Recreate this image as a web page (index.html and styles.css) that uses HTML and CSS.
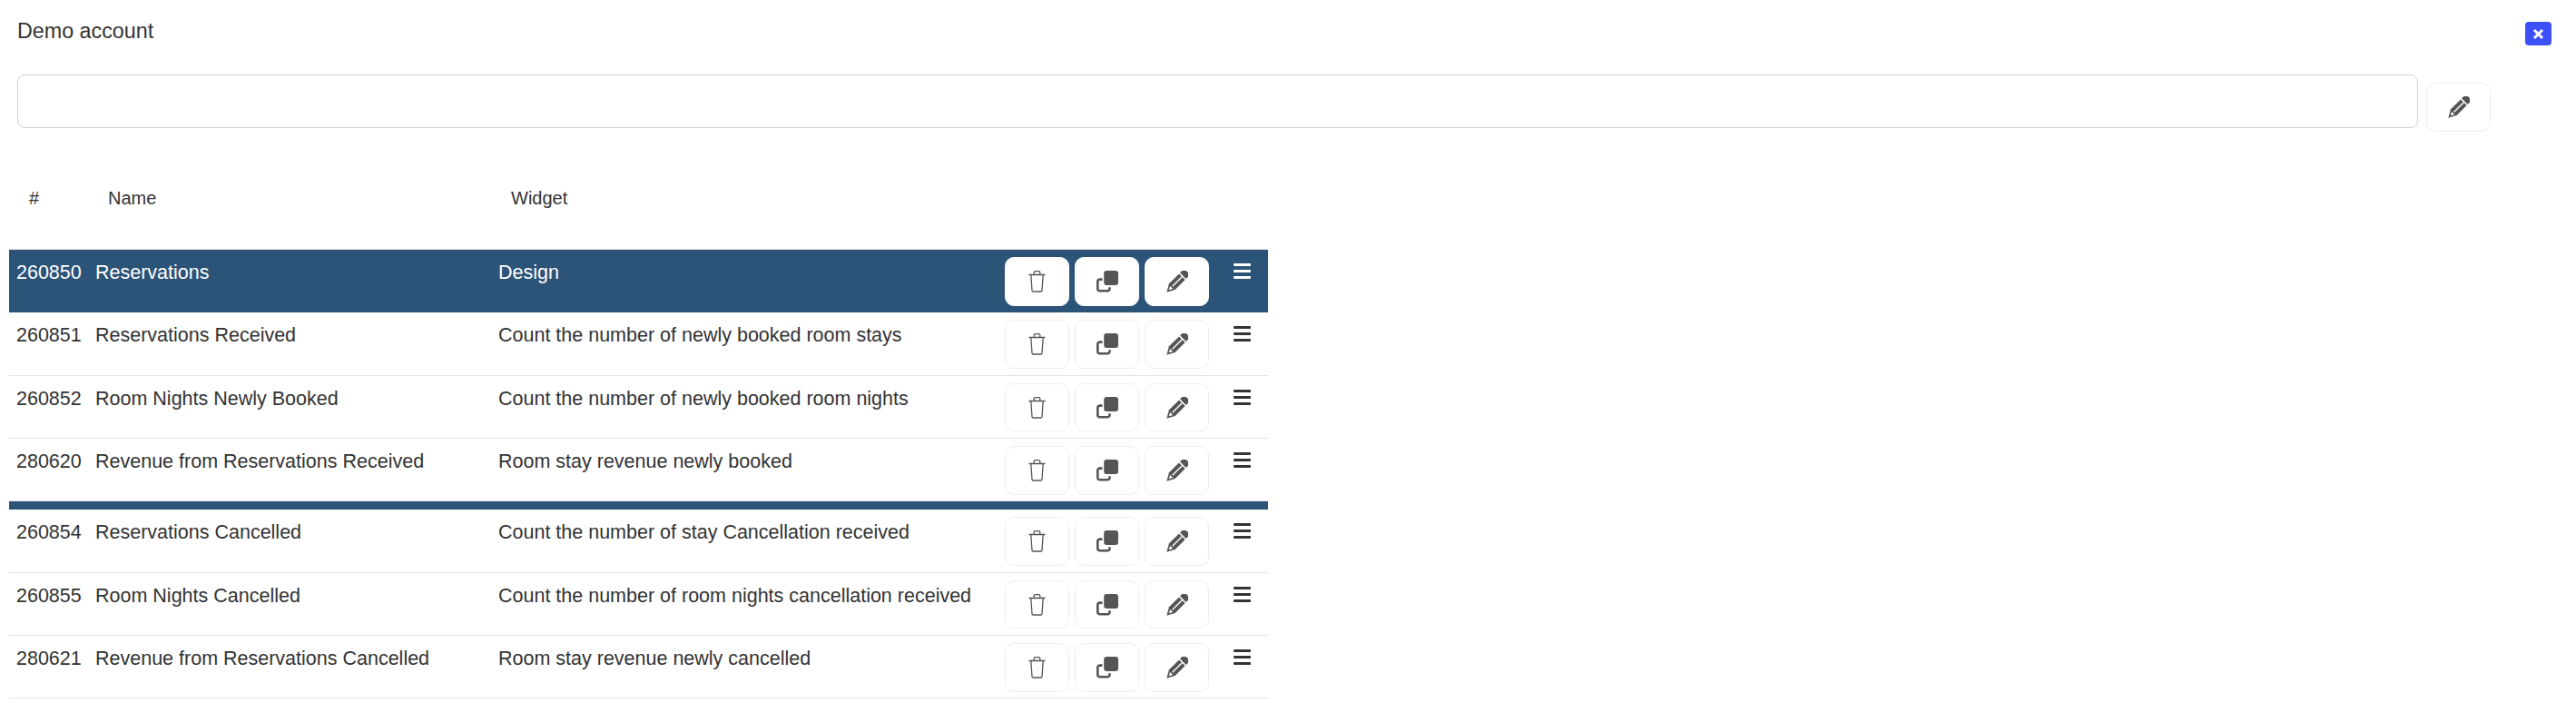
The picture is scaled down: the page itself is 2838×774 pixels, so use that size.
FILE: index.html
```html
<!DOCTYPE html>
<html lang="en">
  <head>
    <meta charset="UTF-8" />
    <title>Demo account</title>
    <link rel="stylesheet" href="styles.css">
  </head>
  <body>
    <svg class="defs" xmlns="http://www.w3.org/2000/svg">
      <symbol id="i-trash" viewBox="0 0 19 24">
        <path d="M.5 4.500h18M2.800 4.500l1.200 17.500a1.200 1.200 0 0 0 1.200 1h8.600a1.200 1.200 0 0 0 1.200-1L16.200 4.500M6.200 4.500V2a1.300 1.300 0 0 1 1.300-1.300h4A1.300 1.300 0 0 1 12.800 2v2.500" fill="none" stroke="currentColor" stroke-width="1.300"/>
      </symbol>
      <symbol id="i-copy" viewBox="0 0 24 24">
        <rect x="8.200" y="0" width="15.800" height="16" rx="3" fill="currentColor"/>
        <path d="M6.500 9.600H3.600a2.300 2.300 0 0 0-2.300 2.300v8a2.300 2.300 0 0 0 2.300 2.300h8.600a2.300 2.300 0 0 0 2.300-2.300v-1.700" fill="none" stroke="currentColor" stroke-width="2.600"/>
      </symbol>
      <symbol id="i-pencil" viewBox="0 0 24 24">
        <g transform="translate(0.300 23.700) rotate(-45)">
          <path d="M0 0 8.500-4.700H24V4.700H8.500z" fill="currentColor"/>
          <path d="M25.500-4.700H29.500a2.500 2.500 0 0 1 2.500 2.500V2.200a2.500 2.500 0 0 1-2.500 2.500H25.500z" fill="currentColor"/>
          <path d="M9 0H24" stroke="#fff" stroke-width="1.400"/>
          <path d="M3.500 0 7.500-2.100V2.100z" fill="#fff"/>
        </g>
      </symbol>
      <symbol id="i-bars" viewBox="0 0 19 17">
        <rect width="19" height="3" y="0" rx="1" fill="currentColor"/>
        <rect width="19" height="3" y="7" rx="1" fill="currentColor"/>
        <rect width="19" height="3" y="14" rx="1" fill="currentColor"/>
      </symbol>
    </svg>
    <div class="top">
      <div class="title">Demo account</div>
      <button class="close" type="button">
        <svg width="13" height="13" viewBox="0 0 13 13"><path d="M2 2l9 9M11 2l-9 9" stroke="#fff" stroke-width="3"/></svg>
      </button>
    </div>
    <div class="name-row">
      <input class="name-input" type="text">
      <button class="btn" type="button"><svg class="icon-pencil"><use href="#i-pencil"/></svg></button>
    </div>
    <table class="list">
      <thead>
        <tr>
          <th class="col-id">#</th>
          <th class="col-name">Name</th>
          <th class="col-widget">Widget</th>
          <th class="col-actions"></th>
          <th class="col-move"></th>
        </tr>
      </thead>
      <tbody id="tbody">
        <tr class="active">
          <td>260850</td>
          <td>Reservations</td>
          <td>Design</td>
          <td><div class="actions">
            <button class="btn" type="button"><svg class="icon-trash"><use href="#i-trash"/></svg></button>
            <button class="btn" type="button"><svg class="icon-copy"><use href="#i-copy"/></svg></button>
            <button class="btn" type="button"><svg class="icon-pencil"><use href="#i-pencil"/></svg></button>
          </div></td>
          <td class="move"><svg class="icon-bars"><use href="#i-bars"/></svg></td>
        </tr>
        <tr>
          <td>260851</td>
          <td>Reservations Received</td>
          <td>Count the number of newly booked room stays</td>
          <td><div class="actions">
            <button class="btn" type="button"><svg class="icon-trash"><use href="#i-trash"/></svg></button>
            <button class="btn" type="button"><svg class="icon-copy"><use href="#i-copy"/></svg></button>
            <button class="btn" type="button"><svg class="icon-pencil"><use href="#i-pencil"/></svg></button>
          </div></td>
          <td class="move"><svg class="icon-bars"><use href="#i-bars"/></svg></td>
        </tr>
        <tr>
          <td>260852</td>
          <td>Room Nights Newly Booked</td>
          <td>Count the number of newly booked room nights</td>
          <td><div class="actions">
            <button class="btn" type="button"><svg class="icon-trash"><use href="#i-trash"/></svg></button>
            <button class="btn" type="button"><svg class="icon-copy"><use href="#i-copy"/></svg></button>
            <button class="btn" type="button"><svg class="icon-pencil"><use href="#i-pencil"/></svg></button>
          </div></td>
          <td class="move"><svg class="icon-bars"><use href="#i-bars"/></svg></td>
        </tr>
        <tr>
          <td>280620</td>
          <td>Revenue from Reservations Received</td>
          <td>Room stay revenue newly booked</td>
          <td><div class="actions">
            <button class="btn" type="button"><svg class="icon-trash"><use href="#i-trash"/></svg></button>
            <button class="btn" type="button"><svg class="icon-copy"><use href="#i-copy"/></svg></button>
            <button class="btn" type="button"><svg class="icon-pencil"><use href="#i-pencil"/></svg></button>
          </div></td>
          <td class="move"><svg class="icon-bars"><use href="#i-bars"/></svg></td>
        </tr>
        <tr class="divider"><td colspan="5"></td></tr>
        <tr>
          <td>260854</td>
          <td>Reservations Cancelled</td>
          <td>Count the number of stay Cancellation received</td>
          <td><div class="actions">
            <button class="btn" type="button"><svg class="icon-trash"><use href="#i-trash"/></svg></button>
            <button class="btn" type="button"><svg class="icon-copy"><use href="#i-copy"/></svg></button>
            <button class="btn" type="button"><svg class="icon-pencil"><use href="#i-pencil"/></svg></button>
          </div></td>
          <td class="move"><svg class="icon-bars"><use href="#i-bars"/></svg></td>
        </tr>
        <tr>
          <td>260855</td>
          <td>Room Nights Cancelled</td>
          <td>Count the number of room nights cancellation received</td>
          <td><div class="actions">
            <button class="btn" type="button"><svg class="icon-trash"><use href="#i-trash"/></svg></button>
            <button class="btn" type="button"><svg class="icon-copy"><use href="#i-copy"/></svg></button>
            <button class="btn" type="button"><svg class="icon-pencil"><use href="#i-pencil"/></svg></button>
          </div></td>
          <td class="move"><svg class="icon-bars"><use href="#i-bars"/></svg></td>
        </tr>
        <tr>
          <td>280621</td>
          <td>Revenue from Reservations Cancelled</td>
          <td>Room stay revenue newly cancelled</td>
          <td><div class="actions">
            <button class="btn" type="button"><svg class="icon-trash"><use href="#i-trash"/></svg></button>
            <button class="btn" type="button"><svg class="icon-copy"><use href="#i-copy"/></svg></button>
            <button class="btn" type="button"><svg class="icon-pencil"><use href="#i-pencil"/></svg></button>
          </div></td>
          <td class="move"><svg class="icon-bars"><use href="#i-bars"/></svg></td>
        </tr>
      </tbody>
    </table>
  </body>
</html>
```

FILE: styles.css
```css
body {
  margin: 0;
  background: #fff;
  color: #333;
  font-family: "Liberation Sans", Arial, sans-serif;
  font-size: 21.5px;
  line-height: 1.5;
}
.defs {
  display: none;
}
.top {
  display: flex;
  justify-content: space-between;
  padding: 16px 27px 0 19px;
  height: 66px;
  box-sizing: border-box;
}
.title {
  font-size: 23.3px;
  line-height: 36px;
}
.close {
  width: 29px;
  height: 26px;
  margin-top: 8px;
  padding: 0;
  border: 0;
  border-radius: 4px;
  background: #3d50fa;
  display: flex;
  align-items: center;
  justify-content: center;
}
.name-row {
  display: flex;
  align-items: flex-start;
  margin-top: 16px;
  padding-left: 19px;
}
.name-input {
  width: 2645px;
  height: 59px;
  box-sizing: border-box;
  border: 1px solid #ced1d9;
  border-radius: 8px;
  background: #fff;
}
.name-row .btn {
  margin: 9px 0 0 9px;
}
.btn {
  width: 71px;
  height: 53.600px;
  padding: 0;
  border: 1px solid #eee;
  border-radius: 10px;
  background: #fff;
  color: #555;
  display: flex;
  align-items: center;
  justify-content: center;
}
.icon-trash {
  width: 19px;
  height: 24px;
}
.icon-copy,
.icon-pencil {
  width: 24px;
  height: 24px;
}
.icon-bars {
  display: block;
  width: 19px;
  height: 17px;
}
.list {
  margin: 16px 0 0 10px;
  width: 1387px;
  table-layout: fixed;
  border-collapse: collapse;
}
.list th {
  box-sizing: border-box;
  height: 114px;
  padding: 2px 22px 0;
  font-size: 20px;
  font-weight: 400;
  text-align: left;
  vertical-align: middle;
  border-bottom: 1px solid #e4e4e4;
}
.col-id {
  width: 87px;
}
.col-name {
  width: 444px;
}
.col-widget {
  width: 558px;
}
.col-actions {
  width: 242px;
}
.list td {
  box-sizing: border-box;
  height: 69.330px;
  padding: 9px 8px 0;
  vertical-align: top;
  white-space: nowrap;
  border-bottom: 1px solid #e2e4e8;
}
.list td.move {
  padding: 15px 0 0 18px;
}
.actions {
  display: flex;
  gap: 6px;
  margin-top: -1px;
}
.active td {
  background: #2c5378;
  color: #fff;
  border-bottom: 0;
}
.active .btn {
  border-color: #fff;
}
.list .divider td {
  height: 9px;
  padding: 0;
  background: #2c5378;
  border-bottom: 0;
}
```
